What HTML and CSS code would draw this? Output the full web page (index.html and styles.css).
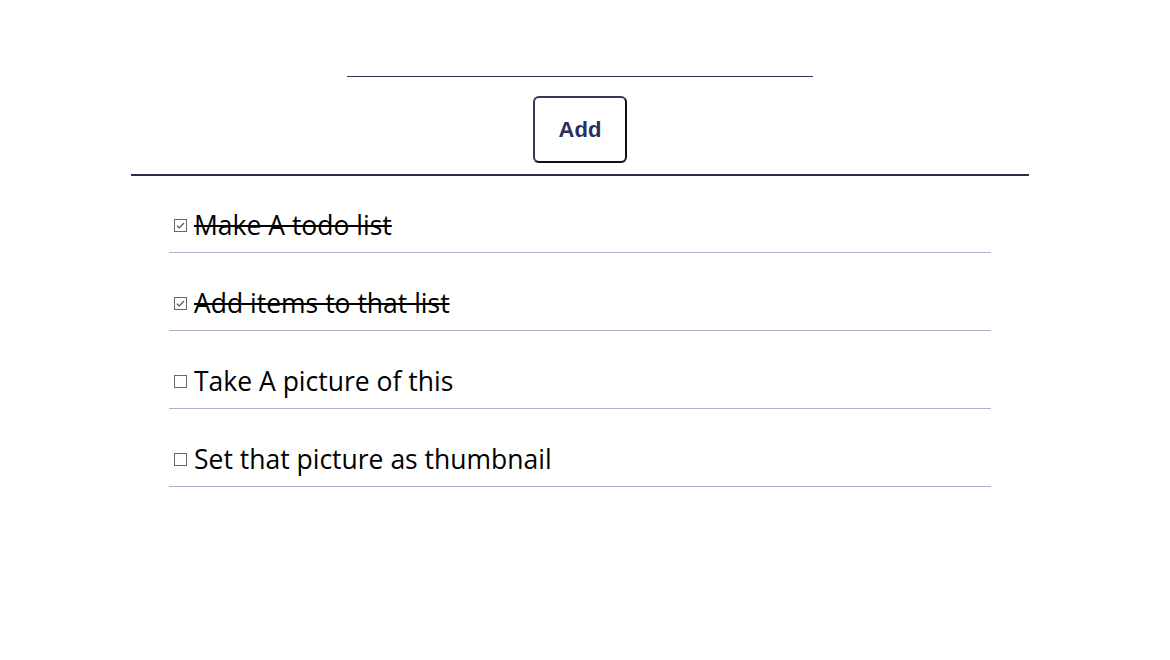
FILE: index.html
```html
<!DOCTYPE html>
<html>
<head>
<meta charset="utf-8">
<link rel="stylesheet" href="styles.css">
</head>
<body>
<div class="app">
  <div class="form">
    <input class="new-todo" type="text">
    <button class="add-btn">Add</button>
  </div>
  <div class="rule"></div>
  <ul class="todos">
    <li class="todo done"><span class="box"><svg viewBox="0 0 13 13" width="13" height="13"><path d="M3 6.8 L5.3 9 L10 4" fill="none" stroke="#555" stroke-width="1.2"/></svg></span><span class="label">Make A todo list</span></li>
    <li class="todo done"><span class="box"><svg viewBox="0 0 13 13" width="13" height="13"><path d="M3 6.8 L5.3 9 L10 4" fill="none" stroke="#555" stroke-width="1.2"/></svg></span><span class="label">Add items to that list</span></li>
    <li class="todo"><span class="box"></span><span class="label">Take A picture of this</span></li>
    <li class="todo"><span class="box"></span><span class="label">Set that picture as thumbnail</span></li>
  </ul>
</div>
</body>
</html>
```
FILE: styles.css
```css
html, body {
  margin: 0;
  padding: 0;
  background: #fff;
}
.app {
  width: 1160px;
  display: flex;
  flex-direction: column;
  align-items: center;
}
.form {
  display: flex;
  flex-direction: column;
  align-items: center;
}
.new-todo {
  display: block;
  box-sizing: border-box;
  width: 466px;
  height: 30px;
  margin: 47px 0 0;
  padding: 0;
  border: none;
  border-bottom: 1px solid #2e2e5a;
  outline: none;
  background: transparent;
}
.add-btn {
  box-sizing: border-box;
  width: 94px;
  height: 67px;
  margin-top: 19px;
  background: #fff;
  border: 2px solid;
  border-color: #35355c #111 #111 #35355c;
  border-radius: 6px;
  font-family: "Liberation Sans", Arial, sans-serif;
  font-weight: bold;
  font-size: 22px;
  color: #2a2d5e;
  padding: 0;
}
.rule {
  width: 898px;
  height: 2px;
  background: #2b2b50;
  margin-top: 11px;
}
.todos {
  list-style: none;
  margin: -1px 0 0;
  padding: 0;
  width: 822px;
}
.todo {
  box-sizing: border-box;
  height: 78px;
  border-bottom: 1px solid #b3b1c9;
  display: flex;
  align-items: flex-end;
  padding: 0 0 12px 5px;
  font-family: "Open Sans", "Noto Sans", sans-serif;
  font-size: 26.5px;
  line-height: 30px;
  color: #000;
}
.box {
  box-sizing: border-box;
  width: 13px;
  height: 13px;
  border: 1px solid #666;
  margin: 0 7px 8px 0;
  flex: none;
  display: flex;
}
.box svg {
  margin: -1px;
}
.done .label {
  text-decoration: line-through;
  text-decoration-thickness: 2px;
}
```
